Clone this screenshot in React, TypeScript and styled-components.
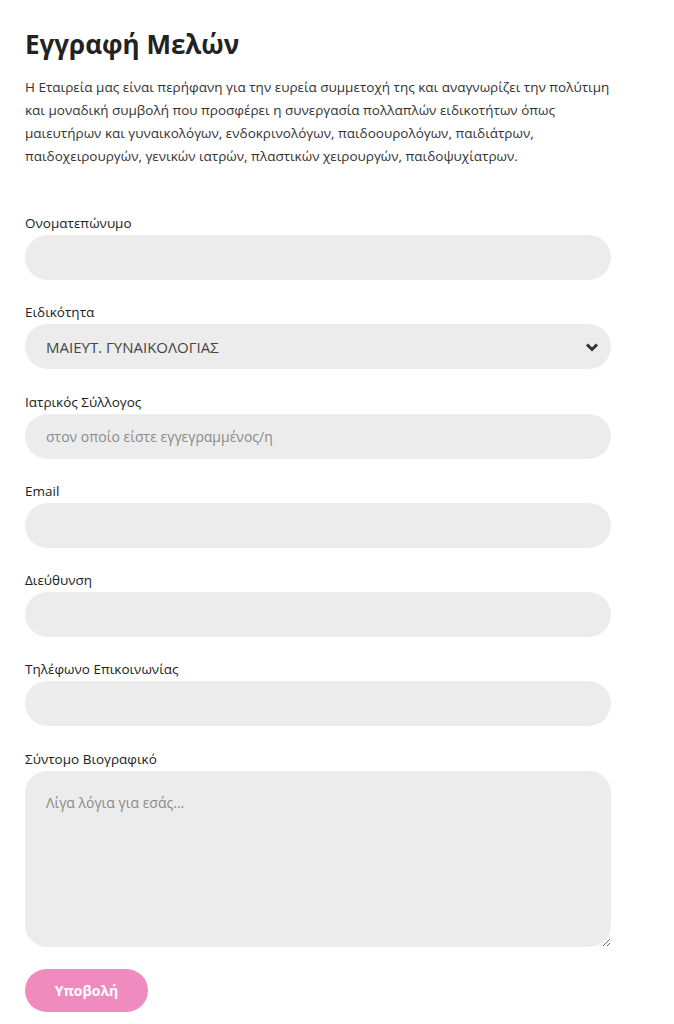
import React from "react";
import styled, { createGlobalStyle } from "styled-components";

const GlobalStyle = createGlobalStyle`
  body {
    margin: 0;
    background: #fff;
    font-family: "Open Sans", "Noto Sans", sans-serif;
    color: #333;
  }
`;

const fields = [
  { label: "Ονοματεπώνυμο", placeholder: "" },
  { label: "Ειδικότητα", select: true },
  { label: "Ιατρικός Σύλλογος", placeholder: "στον οποίο είστε εγγεγραμμένος/η" },
  { label: "Email", placeholder: "" },
  { label: "Διεύθυνση", placeholder: "" },
  { label: "Τηλέφωνο Επικοινωνίας", placeholder: "" },
];

const App: React.FC = () => {
  return (
    <>
      <GlobalStyle />
      <Page>
        <Title>Εγγραφή Μελών</Title>
        <Intro>
          Η Εταιρεία μας είναι περήφανη για την ευρεία συμμετοχή της και αναγνωρίζει την πολύτιμη
          <br />
          και μοναδική συμβολή που προσφέρει η συνεργασία πολλαπλών ειδικοτήτων όπως
          <br />
          μαιευτήρων και γυναικολόγων, ενδοκρινολόγων, παιδοουρολόγων, παιδιάτρων,
          <br />
          παιδοχειρουργών, γενικών ιατρών, πλαστικών χειρουργών, παιδοψυχίατρων.
        </Intro>
        <Form onSubmit={(e) => e.preventDefault()}>
          {fields.map((f) => (
            <Field key={f.label}>
              <Label>{f.label}</Label>
              {f.select ? (
                <SelectWrap>
                  <Select defaultValue="mg">
                    <option value="mg">ΜΑΙΕΥΤ. ΓΥΝΑΙΚΟΛΟΓΙΑΣ</option>
                  </Select>
                  <Chevron viewBox="0 0 14 10" aria-hidden>
                    <path d="M2 2.5 L7 7.5 L12 2.5" fill="none" stroke="#333" strokeWidth="3" />
                  </Chevron>
                </SelectWrap>
              ) : (
                <Input placeholder={f.placeholder} />
              )}
            </Field>
          ))}
          <Field>
            <Label>Σύντομο Βιογραφικό</Label>
            <TextArea placeholder="Λίγα λόγια για εσάς..." />
          </Field>
          <SubmitButton type="submit">Υποβολή</SubmitButton>
        </Form>
      </Page>
    </>
  );
};

export default App;

const Page = styled.div`
  padding: 26px 25px 12px 25px;
  width: 586px;
`;

const Title = styled.h1`
  margin: 0 0 14px 0;
  font-size: 26px;
  line-height: 36px;
  font-weight: 700;
  color: #222;
`;

const Intro = styled.p`
  margin: 0 0 46px 0;
  font-size: 13.5px;
  line-height: 23px;
  color: #333;
  white-space: nowrap;
`;

const Form = styled.form`
  display: flex;
  flex-direction: column;
  gap: 23.3px;
`;

const Field = styled.div`
  display: flex;
  flex-direction: column;
  gap: 3px;
`;

const Label = styled.label`
  font-size: 13.5px;
  line-height: 18px;
  color: #222;
`;

const inputBase = `
  box-sizing: border-box;
  width: 100%;
  border: none;
  outline: none;
  background: #ececec;
  font-family: "Open Sans", "Noto Sans", sans-serif;
  font-size: 14px;
  color: #333;
  padding: 0 21px;
  &::placeholder {
    color: #8a8a8a;
  }
`;

const Input = styled.input`
  ${inputBase}
  height: 45px;
  border-radius: 23px;
`;

const SelectWrap = styled.div`
  position: relative;
`;

const Select = styled.select`
  ${inputBase}
  height: 45px;
  border-radius: 23px;
  font-size: 15px;
  color: #444;
  appearance: none;
  -webkit-appearance: none;
`;

const Chevron = styled.svg`
  position: absolute;
  right: 12px;
  top: 18px;
  width: 14px;
  height: 10px;
  pointer-events: none;
`;

const TextArea = styled.textarea`
  ${inputBase}
  height: 176px;
  border-radius: 22px;
  padding: 22px 21px;
  resize: vertical;
  display: block;
`;

const SubmitButton = styled.button`
  align-self: flex-start;
  margin-top: -1px;
  width: 123px;
  height: 43px;
  border: none;
  border-radius: 22px;
  background: #f08bbf;
  color: #fff;
  font-family: "Open Sans", "Noto Sans", sans-serif;
  font-size: 14px;
  font-weight: 700;
  cursor: pointer;
`;
